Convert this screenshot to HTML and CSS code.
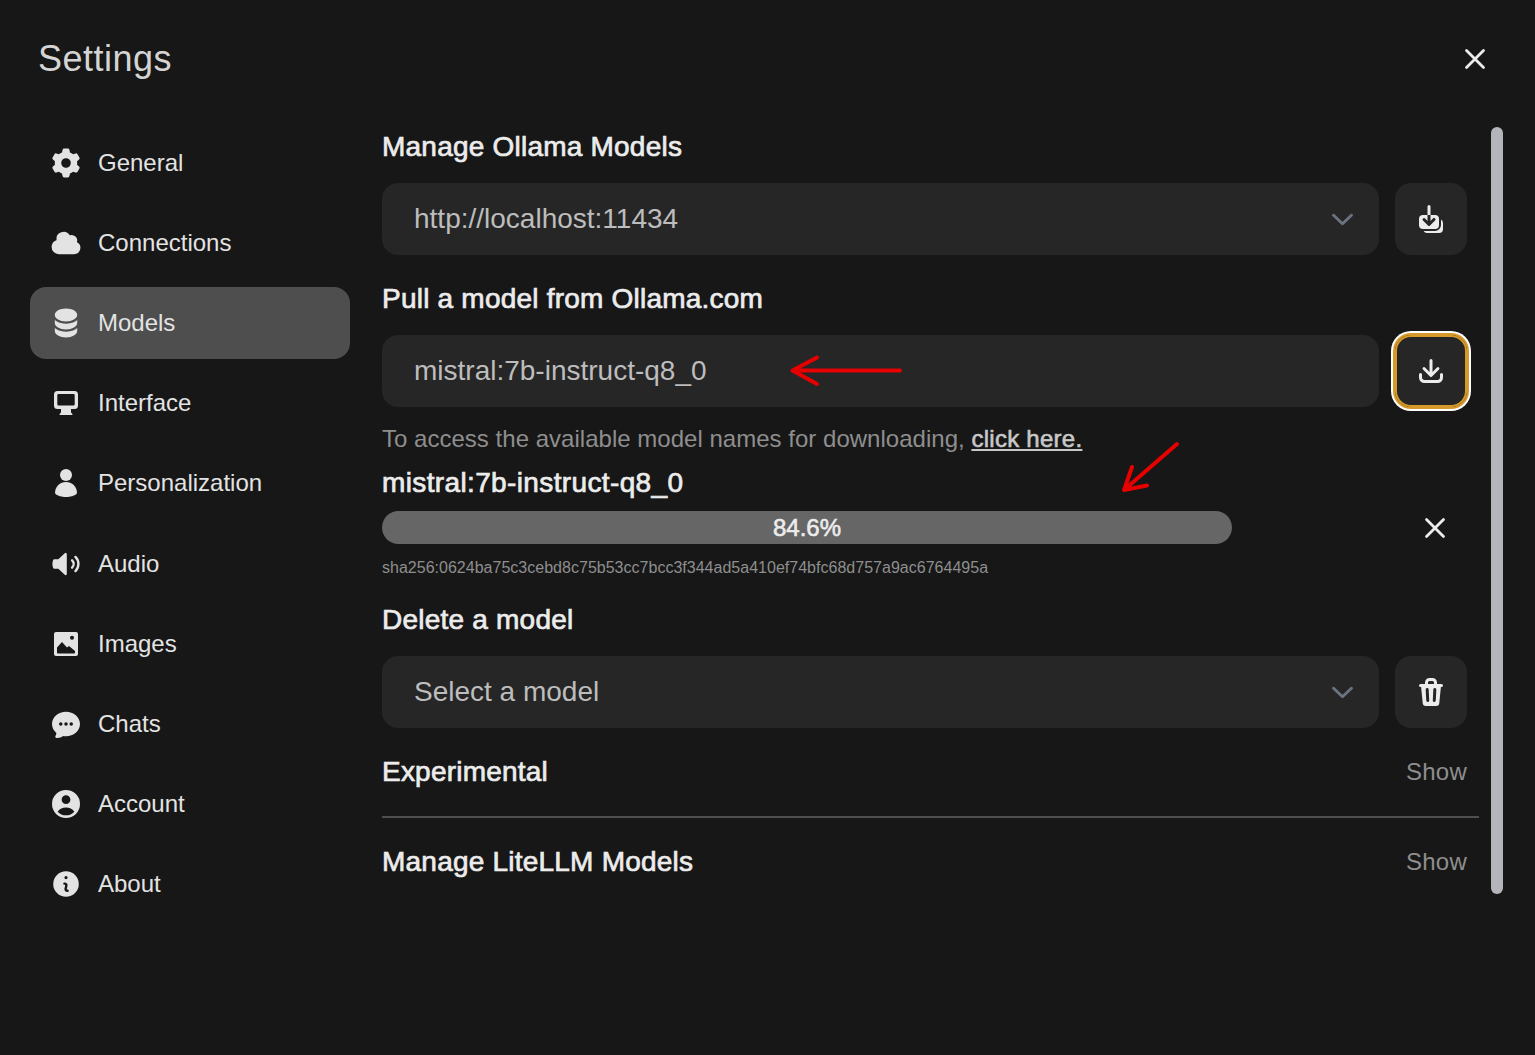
FILE: index.html
```html
<!DOCTYPE html>
<html lang="en">
<head>
<meta charset="utf-8">
<title>Settings</title>
<link rel="stylesheet" href="styles.css">
</head>
<body>
<div class="page">
  <header class="top">
    <h1 class="title">Settings</h1>
    <button class="close-btn" aria-label="Close">
      <svg class="x-icon" viewBox="0 0 24 24" fill="none" stroke="currentColor" stroke-width="2.800" stroke-linecap="round"><path d="M3.500 3.500l17 17M20.500 3.500l-17 17"/></svg>
    </button>
  </header>
  <div class="body">
    <nav class="nav">
      <a class="nav-item"><svg class="nav-icon" viewBox="0 0 20 20"><path fill-rule="evenodd" clip-rule="evenodd" d="M7.84 1.804A1 1 0 0 1 8.82 1h2.36a1 1 0 0 1 .98.804l.331 1.652a6.993 6.993 0 0 1 1.929 1.115l1.598-.54a1 1 0 0 1 1.186.447l1.18 2.044a1 1 0 0 1-.205 1.251l-1.267 1.113a7.047 7.047 0 0 1 0 2.228l1.267 1.113a1 1 0 0 1 .206 1.25l-1.18 2.045a1 1 0 0 1-1.187.447l-1.598-.54a6.993 6.993 0 0 1-1.929 1.115l-.33 1.652a1 1 0 0 1-.98.804H8.82a1 1 0 0 1-.98-.804l-.331-1.652a6.993 6.993 0 0 1-1.929-1.115l-1.598.54a1 1 0 0 1-1.186-.447l-1.18-2.044a1 1 0 0 1 .205-1.251l1.267-1.114a7.05 7.05 0 0 1 0-2.227L1.821 7.773a1 1 0 0 1-.206-1.25l1.18-2.045a1 1 0 0 1 1.187-.447l1.598.54A6.992 6.992 0 0 1 7.51 3.456l.33-1.652ZM10 13a3 3 0 1 0 0-6 3 3 0 0 0 0 6Z"/></svg><span>General</span></a>
      <a class="nav-item"><svg class="nav-icon" viewBox="0 0 20 20"><path d="M1 12.5A4.5 4.5 0 0 0 5.5 17H15a4 4 0 0 0 1.866-7.539 3.504 3.504 0 0 0-4.504-4.272A4.5 4.5 0 0 0 4.06 8.235 4.5 4.5 0 0 0 1 12.5Z"/></svg><span>Connections</span></a>
      <a class="nav-item active"><svg class="nav-icon" viewBox="0 0 20 20"><path d="M10 1c3.866 0 7 1.79 7 4s-3.134 4-7 4-7-1.79-7-4 3.134-4 7-4zm5.694 8.13c.464-.264.91-.583 1.306-.952V10c0 2.21-3.134 4-7 4s-7-1.79-7-4V8.178c.396.37.842.688 1.306.953C5.838 10.006 7.854 10.5 10 10.5s4.162-.494 5.694-1.37zM3 13.179V15c0 2.21 3.134 4 7 4s7-1.79 7-4v-1.822c-.396.37-.842.688-1.306.953-1.532.875-3.548 1.369-5.694 1.369s-4.162-.494-5.694-1.37A7.009 7.009 0 013 13.179z"/></svg><span>Models</span></a>
      <a class="nav-item"><svg class="nav-icon" viewBox="0 0 32 32"><path fill-rule="evenodd" clip-rule="evenodd" d="M7.500 4h17A3.500 3.500 0 0 1 28 7.500v11a3.500 3.500 0 0 1-3.500 3.500H21v3.500l1 1a.8.8 0 0 1-.6 1.500H10.600a.8.8 0 0 1-.6-1.500l1-1V22H7.500A3.500 3.500 0 0 1 4 18.500v-11A3.500 3.500 0 0 1 7.500 4ZM8.500 7A1.200 1.200 0 0 0 7.300 8.200v9.100a1.200 1.200 0 0 0 1.200 1.200h15a1.200 1.200 0 0 0 1.200-1.200V8.200A1.200 1.200 0 0 0 23.500 7h-15Z"/></svg><span>Interface</span></a>
      <a class="nav-item"><svg class="nav-icon" viewBox="0 0 32 32"><circle cx="16" cy="8" r="6"/><path d="M5 26c0-6.500 5-11 11-11s11 4.500 11 11c0 1.500-5 4-11 4s-11-2.500-11-4Z"/></svg><span>Personalization</span></a>
      <a class="nav-item"><svg class="nav-icon" viewBox="0 0 20 20"><path d="M10.500 3.750a.75.75 0 0 0-1.264-.546L5.203 7H2.667a.75.75 0 0 0-.7.48A6.985 6.985 0 0 0 1.500 10c0 .887.165 1.737.468 2.520.111.29.39.48.7.48h2.535l4.033 3.796a.75.75 0 0 0 1.264-.546V3.750ZM16.450 5.050a.75.75 0 0 0-1.060 1.061 5.500 5.500 0 0 1 0 7.778.75.75 0 0 0 1.060 1.060 7 7 0 0 0 0-9.899Z"/><path d="M14.329 7.172a.75.75 0 0 0-1.061 1.060 2.500 2.500 0 0 1 0 3.536.75.75 0 0 0 1.060 1.060 4 4 0 0 0 0-5.656Z"/></svg><span>Audio</span></a>
      <a class="nav-item"><svg class="nav-icon" viewBox="0 0 32 32"><path fill-rule="evenodd" clip-rule="evenodd" d="M6 4h20a2 2 0 0 1 2 2v20a2 2 0 0 1-2 2H6a2 2 0 0 1-2-2V6a2 2 0 0 1 2-2ZM7 24.500V19.500l5-5.500 5 5.500 2-1.500 6 5v1.500a1 1 0 0 1-1 1H8a1 1 0 0 1-1-1ZM22 7.700a2 2 0 1 0 0 4 2 2 0 0 0 0-4Z"/></svg><span>Images</span></a>
      <a class="nav-item"><svg class="nav-icon" viewBox="0.85 0.85 18.300 18.300"><path fill-rule="evenodd" clip-rule="evenodd" d="M10 3c-4.310 0-8 3.033-8 7 0 2.024.978 3.825 2.499 5.085a3.478 3.478 0 0 1-.522 1.756.75.75 0 0 0 .584 1.143 5.976 5.976 0 0 0 3.936-1.108c.487.082.99.124 1.503.124 4.310 0 8-3.033 8-7s-3.690-7-8-7Zm0 8a1 1 0 1 0 0-2 1 1 0 0 0 0 2Zm-2-1a1 1 0 1 1-2 0 1 1 0 0 1 2 0Zm5 1a1 1 0 1 0 0-2 1 1 0 0 0 0 2Z"/></svg><span>Chats</span></a>
      <a class="nav-item"><svg class="nav-icon" viewBox="0.85 0.85 18.300 18.300"><path fill-rule="evenodd" clip-rule="evenodd" d="M18 10a8 8 0 1 1-16 0 8 8 0 0 1 16 0Zm-5.500-2.500a2.500 2.500 0 1 1-5 0 2.500 2.500 0 0 1 5 0ZM10 12a5.990 5.990 0 0 0-4.793 2.390A6.483 6.483 0 0 0 10 16.500a6.483 6.483 0 0 0 4.793-2.110A5.990 5.990 0 0 0 10 12Z"/></svg><span>Account</span></a>
      <a class="nav-item"><svg class="nav-icon" viewBox="0 0 20 20"><path fill-rule="evenodd" clip-rule="evenodd" d="M18 10a8 8 0 1 1-16 0 8 8 0 0 1 16 0Zm-7-4a1 1 0 1 1-2 0 1 1 0 0 1 2 0ZM9 9a.75.75 0 0 0 0 1.500h.253a.25.25 0 0 1 .244.304l-.459 2.066A1.750 1.750 0 0 0 10.747 15H11a.75.75 0 0 0 0-1.500h-.253a.25.25 0 0 1-.244-.304l.459-2.066A1.750 1.750 0 0 0 9.253 9H9Z"/></svg><span>About</span></a>
    </nav>
    <main class="content">
      <h2 class="heading h-first">Manage Ollama Models</h2>
      <div class="control-row">
        <div class="field select"><span>http://localhost:11434</span>
          <svg class="chev" viewBox="0 0 20 12" fill="none" stroke="currentColor" stroke-width="2.800" stroke-linecap="round" stroke-linejoin="round"><path d="M1.500 2l8.500 8 8.500-8"/></svg>
        </div>
        <button class="icon-btn" aria-label="Update">
          <svg class="btn-icon" viewBox="0 0 16 16"><path d="M7 1a.75.75 0 0 1 .75.75V6h-1.500V1.750A.75.75 0 0 1 7 1ZM6.250 6v2.940L5.030 7.720a.75.75 0 0 0-1.060 1.060l2.500 2.500a.75.75 0 0 0 1.060 0l2.500-2.500a.75.75 0 1 0-1.060-1.060L7.750 8.940V6H10a2 2 0 0 1 2 2v3a2 2 0 0 1-2 2H4a2 2 0 0 1-2-2V8a2 2 0 0 1 2-2h2.250Z"/><path d="M4.268 14A2 2 0 0 0 6 15h6a2 2 0 0 0 2-2v-3a2 2 0 0 0-1-1.732V11a3 3 0 0 1-3 3H4.268Z"/></svg>
        </button>
      </div>
      <h2 class="heading h-pull">Pull a model from Ollama.com</h2>
      <div class="control-row">
        <div class="field"><span>mistral:7b-instruct-q8_0</span></div>
        <button class="icon-btn focused" aria-label="Pull">
          <svg class="btn-icon" viewBox="0 0 16 16"><path d="M8.750 2.750a.75.75 0 0 0-1.500 0v5.690L5.030 6.220a.75.75 0 0 0-1.060 1.060l3.500 3.500a.75.75 0 0 0 1.060 0l3.500-3.500a.75.75 0 0 0-1.060-1.060L8.750 8.440V2.750Z"/><path d="M3.500 9.750a.75.75 0 0 0-1.500 0v1.500A2.750 2.750 0 0 0 4.750 14h6.500A2.750 2.750 0 0 0 14 11.250v-1.500a.75.75 0 0 0-1.500 0v1.500c0 .69-.56 1.250-1.250 1.250h-6.500c-.69 0-1.250-.56-1.250-1.250v-1.500Z"/></svg>
        </button>
      </div>
      <p class="help">To access the available model names for downloading, <a class="help-link">click here.</a></p>
      <div class="pull-name">mistral:7b-instruct-q8_0</div>
      <div class="progress-row">
        <div class="progress">84.6%</div>
        <button class="cancel" aria-label="Cancel">
          <svg class="x-icon" viewBox="0 0 24 24" fill="none" stroke="currentColor" stroke-width="2.800" stroke-linecap="round"><path d="M3.500 3.500l17 17M20.500 3.500l-17 17"/></svg>
        </button>
      </div>
      <div class="digest">sha256:0624ba75c3cebd8c75b53cc7bcc3f344ad5a410ef74bfc68d757a9ac6764495a</div>
      <h2 class="heading h-delete">Delete a model</h2>
      <div class="control-row">
        <div class="field select"><span>Select a model</span>
          <svg class="chev" viewBox="0 0 20 12" fill="none" stroke="currentColor" stroke-width="2.800" stroke-linecap="round" stroke-linejoin="round"><path d="M1.500 2l8.500 8 8.500-8"/></svg>
        </div>
        <button class="icon-btn" aria-label="Delete">
          <svg class="btn-icon" viewBox="0 0 16 16"><path fill-rule="evenodd" clip-rule="evenodd" d="M5 3.250V4H2.750a.75.75 0 0 0 0 1.500h.3l.815 8.150A1.500 1.500 0 0 0 5.357 15h5.285a1.500 1.500 0 0 0 1.493-1.350l.815-8.150h.3a.75.75 0 0 0 0-1.500H11v-.75A2.250 2.250 0 0 0 8.750 1h-1.500A2.250 2.250 0 0 0 5 3.250Zm2.250-.75a.75.75 0 0 0-.75.75V4h3v-.75a.75.75 0 0 0-.75-.75h-1.500ZM6.050 6a.75.75 0 0 1 .787.713l.275 5.500a.75.75 0 0 1-1.498.075l-.275-5.500A.75.75 0 0 1 6.050 6Zm3.900 0a.75.75 0 0 1 .712.787l-.275 5.500a.75.75 0 0 1-1.498-.075l.275-5.500a.75.75 0 0 1 .786-.711Z"/></svg>
        </button>
      </div>
      <div class="toggle-row exp"><h2 class="heading">Experimental</h2><span class="show">Show</span></div>
      <hr class="rule">
      <div class="toggle-row lite"><h2 class="heading">Manage LiteLLM Models</h2><span class="show">Show</span></div>
    </main>
    <div class="scrollbar"></div>
  </div>
  <svg class="annot" viewBox="0 0 1535 1055" fill="none" stroke="#e60000" stroke-width="4" stroke-linecap="round" stroke-linejoin="round">
    <path d="M900 370.500H792.500M817 357.500L792.500 370.500L817 384"/>
    <path d="M1177 444L1124 490M1132 467L1124 490L1147 485.500"/>
  </svg>
</div>
</body>
</html>
```
FILE: styles.css
```css
* { box-sizing: border-box; }
html, body { margin: 0; padding: 0; }
body {
  background: #171717;
  color: #e3e3e3;
  font-family: "Liberation Sans", Arial, sans-serif;
}
.page { position: relative; width: 1535px; height: 1055px; overflow: hidden; }
.top {
  display: flex;
  align-items: center;
  justify-content: space-between;
  height: 127px;
  padding: 0 48px 10px 38px;
}
.title { margin: 0; font-size: 36px; font-weight: 400; color: #d4d4d4; letter-spacing: 0.5px; }
.close-btn, .cancel { background: none; border: 0; padding: 0; color: #ececec; display: flex; }
.x-icon { width: 24px; height: 24px; }
.body { display: flex; align-items: flex-start; padding-left: 30px; }
.nav { width: 320px; display: flex; flex-direction: column; gap: 8.11px; margin-right: 32px; }
.nav-item {
  display: flex;
  align-items: center;
  height: 72px;
  padding: 0 20px;
  gap: 16px;
  border-radius: 16px;
  font-size: 24px;
  color: #e3e3e3;
}
.nav-item.active { background: #4e4e4e; }
.nav-icon { width: 32px; height: 32px; fill: #e3e3e3; flex: none; }
.content { width: 1097px; height: 767px; padding-right: 12px; }
.heading, .pull-name {
  margin: 0;
  font-size: 28px;
  line-height: 36px;
  font-weight: 400;
  letter-spacing: 0.22px;
  color: #ececec;
  -webkit-text-stroke: 0.7px #ececec;
}
.h-first { margin-top: 2px; margin-bottom: 18px; }
.h-pull { margin-top: 26px; margin-bottom: 18px; }
.control-row { display: flex; gap: 16px; height: 72px; }
.field {
  flex: 1;
  display: flex;
  align-items: center;
  justify-content: space-between;
  padding: 0 26px 0 32px;
  background: #262626;
  border-radius: 16px;
  font-size: 28px;
  color: #bdbdbd;
}
.chev { width: 21px; height: 13px; color: #6b7280; }
.icon-btn {
  width: 72px;
  height: 72px;
  flex: none;
  display: flex;
  align-items: center;
  justify-content: center;
  padding: 0;
  border: 0;
  border-radius: 16px;
  background: #262626;
  color: #ececec;
}
.btn-icon { width: 32px; height: 32px; fill: #ececec; }
.focused { box-shadow: inset 0 0 0 2px #d69a2a, 0 0 0 2px #d69a2a, 0 0 0 4px #fff; }
.help { margin: 18px 0 0; font-size: 24px; line-height: 28px; color: #8e8e8e; letter-spacing: 0.02px; }
.help-link { letter-spacing: 0.27px; color: #c8c8c8; -webkit-text-stroke: 0.6px #c8c8c8; text-decoration: underline; }
.pull-name { margin-top: 12px; letter-spacing: 0.37px; }
.progress-row { display: flex; align-items: center; justify-content: space-between; margin-top: 10px; padding-right: 20px; }
.progress {
  width: 850px;
  height: 33px;
  line-height: 33px;
  text-align: center;
  background: #666;
  border-radius: 17px;
  font-size: 24px;
  color: #ececec;
  -webkit-text-stroke: 0.6px #ececec;
}
.digest { margin-top: 15px; font-size: 16px; line-height: 18px; color: #8e8e8e; letter-spacing: 0.015px; }
.h-delete { margin-top: 25px; margin-bottom: 18px; }
.toggle-row { display: flex; align-items: center; justify-content: space-between; height: 36px; }
.exp { margin-top: 26px; }
.lite { margin-top: 26px; }
.show { font-size: 24px; color: #8e8e8e; letter-spacing: 0.25px; }
.rule { border: 0; height: 2px; margin: 26px -12px 0 0; background: #4e4e4e; }
.scrollbar { width: 12px; height: 767px; margin-left: 12px; background: #b4b5bb; border-radius: 6px; }
.annot { position: absolute; left: 0; top: 0; width: 1535px; height: 1055px; pointer-events: none; }
```
